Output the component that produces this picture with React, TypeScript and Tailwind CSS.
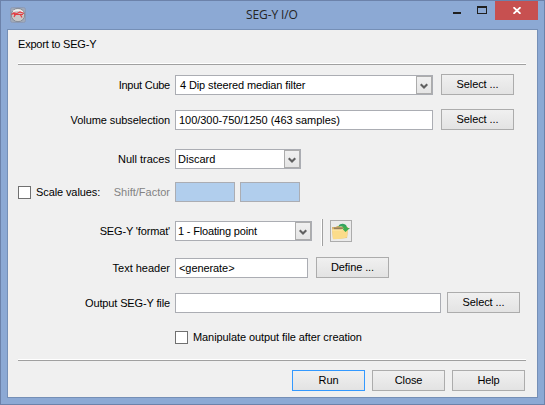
import type { ReactNode } from "react";

function Button({ children, primary = false }: { children: ReactNode; primary?: boolean }) {
  return (
    <button
      className={`h-[21px] w-[73px] shrink-0 border bg-linear-to-b from-[#f0f0f0] to-[#e3e3e3] pb-px text-center leading-[18px] tracking-[-0.1px] ${
        primary ? "border-[#3399ff]" : "border-[#acacac]"
      }`}
    >
      {children}
    </button>
  );
}

function Label({ children, className = "" }: { children: ReactNode; className?: string }) {
  return <div className={`mr-[5px] w-[162px] shrink-0 text-right ${className}`}>{children}</div>;
}

function Field({ children, className }: { children?: ReactNode; className: string }) {
  return <div className={`h-5 shrink-0 border border-[#abadb3] px-[3px] leading-[18px] ${className}`}>{children}</div>;
}

function Combo({ children, className }: { children: ReactNode; className: string }) {
  return (
    <div className={`flex h-5 shrink-0 border border-[#abadb3] bg-white leading-[18px] ${className}`}>
      <span className="grow">{children}</span>
      <span className="flex w-4 items-center justify-center border border-[#acacac] bg-linear-to-b from-[#f0f0f0] to-[#e5e5e5]">
        <svg width="8" height="7" viewBox="0 0 8 7" className="mt-0.5">
          <path d="M0.7 1.2 4 4.5 7.3 1.2" fill="none" stroke="#606060" strokeWidth="2.2" />
        </svg>
      </span>
    </div>
  );
}

function Check() {
  return <span className="size-[13px] shrink-0 border border-[#707070] bg-white" />;
}

function Rule() {
  return <div className="ml-[10px] h-0.5 w-[508px] border-t border-b border-t-white border-b-[#a0a0a0]" />;
}

export default function App() {
  return (
    <div className="flex h-[405px] w-[545px] flex-col border border-[#6c82aa] bg-[#8ca9d4] px-1.5 pb-1.5 font-['Liberation_Sans',Arial,sans-serif] text-[11px] text-black">
      <header className="flex h-7 shrink-0 items-start">
        <svg width="16" height="16" viewBox="0 0 16 16" className="mt-[6px] ml-[3px]">
          <rect x=".5" y=".5" width="15" height="15" rx="2" fill="#a0a9b8" stroke="#8c9bb8" />
          <circle cx="8" cy="8" r="6.7" fill="#c9c8c8" stroke="#858b96" />
          <path d="M3 4.5Q8 1.5 13 5" stroke="#f0eeee" strokeWidth="1.5" fill="none" />
          <path d="M1.5 7.5 4 6 7 6.5 10 5 14 6.5M4 7.5H13M5 8 4 10M10 7 12 10.5M3 6 6 8" stroke="#e43d43" strokeWidth="1.2" fill="none" />
        </svg>
        <h1 className="mt-[5px] ml-[220px] w-[60px] font-['Open_Sans',sans-serif] text-[12px] leading-[18px] font-normal tracking-[-0.1px] whitespace-nowrap text-[#252525]">
          SEG-Y I/O
        </h1>
        <div className="ml-auto flex">
          <svg width="42" height="18" viewBox="0 0 42 18" shapeRendering="crispEdges">
            <path d="M0 11h8v2H0z" fill="#202020" />
            <path d="M24 5h10v8H24zM25 7v5h8V7z" fill="#202020" fillRule="evenodd" />
          </svg>
          <div className="flex h-[19px] w-[43px] items-center justify-center bg-[#c75050]">
            <svg width="8" height="7" viewBox="0 0 8 7" className="ml-px">
              <path d="m.5.2 7 6.6m0-6.6-7 6.6" stroke="white" strokeWidth="1.8" />
            </svg>
          </div>
        </div>
      </header>
      <main className="flex grow flex-col border border-[#758fb6] bg-[#f0f0f0]">
        <div className="h-[33px] shrink-0 pt-[6px] pl-[10px] leading-4 tracking-[-0.2px]">Export to SEG-Y</div>
        <Rule />
        <div className="mt-[9px] flex h-[21px] items-end">
          <Label className="tracking-[-0.25px]"><span className="leading-[19px]">Input Cube</span></Label>
          <Combo className="mr-2 w-[258px] pl-1 tracking-[-0.11px]">4 Dip steered median filter</Combo>
          <Button>Select ...</Button>
        </div>
        <div className="mt-[14px] flex h-[21px] items-end">
          <Label className="tracking-[-0.08px]"><span className="leading-[19px]">Volume subselection</span></Label>
          <Field className="mr-2 w-[258px] bg-white tracking-[-0.04px]">100/300-750/1250 (463 samples)</Field>
          <Button>Select ...</Button>
        </div>
        <div className="mt-[19px] flex h-5 items-center">
          <Label>Null traces</Label>
          <Combo className="w-[126px] pl-0.5">Discard</Combo>
        </div>
        <div className="mt-[13px] flex h-5 items-center">
          <div className="mr-[5px] flex w-[162px] items-center pl-[10px]">
            <Check />
            <span className="ml-[5px] tracking-[-0.1px]">Scale values:</span>
            <span className="ml-auto text-[#838383]">Shift/Factor</span>
          </div>
          <Field className="mr-[5px] w-[60px] bg-[#b1ceed]" />
          <Field className="w-[60px] bg-[#b1ceed]" />
        </div>
        <div className="mt-[17px] flex h-[27px] items-start">
          <Label className="tracking-[-0.15px]"><span className="block pt-[2px] leading-5">SEG-Y 'format'</span></Label>
          <Combo className="mt-0.5 w-[137px] pl-0.5 tracking-[-0.17px]">1 - Floating point</Combo>
          <div className="ml-[9px] h-[27px] w-0.5 border-r border-l border-r-[#a0a0a0] border-l-white" />
          <div className="mt-px ml-[7px] flex size-[22px] items-center justify-center border border-[#acacac] bg-[#ebebeb]">
            <svg width="20" height="20" viewBox="0 0 20 20">
              <path d="M1 6h4l1-1h3l1 1h7l-1 11-14 1z" fill="#d5b06a" />
              <path d="M3 6.5h12v2.5H3z" fill="#97805a" />
              <path d="M1 8.5h9l2-1h5l-1 9q-7 2-14 1.7z" fill="#fbdc8a" />
              <path d="M1.5 9h9l2-1h4" stroke="#ffeaae" fill="none" />
              <path d="M7 5.5Q10 1 15 4l1.5 3H19l-4.5 4L11 7.5h2Q11.500 4.500 7 5.500" fill="#3fae50" />
              <path d="M8 4.500q4-2.500 7 1" stroke="#2b9a73" fill="none" />
            </svg>
          </div>
        </div>
        <div className="mt-[11px] flex h-[21px] items-end">
          <Label><span className="leading-[19px]">Text header</span></Label>
          <Field className="mr-2 w-[133px] bg-white tracking-[-0.08px]">&lt;generate&gt;</Field>
          <Button>Define ...</Button>
        </div>
        <div className="mt-[14px] flex h-[21px] items-end">
          <Label className="tracking-[-0.13px]"><span className="leading-[19px]">Output SEG-Y file</span></Label>
          <Field className="mr-1.5 w-[266px] bg-white" />
          <Button>Select ...</Button>
        </div>
        <div className="mt-[18px] ml-[167px] flex h-[13px] items-center">
          <Check />
          <span className="ml-[5px] tracking-[-0.08px]">Manipulate output file after creation</span>
        </div>
        <div className="mt-[15px]"><Rule /></div>
        <footer className="mt-[9px] mr-3 flex justify-end gap-[7px]">
          <Button primary>Run</Button>
          <Button>Close</Button>
          <Button>Help</Button>
        </footer>
      </main>
    </div>
  );
}
